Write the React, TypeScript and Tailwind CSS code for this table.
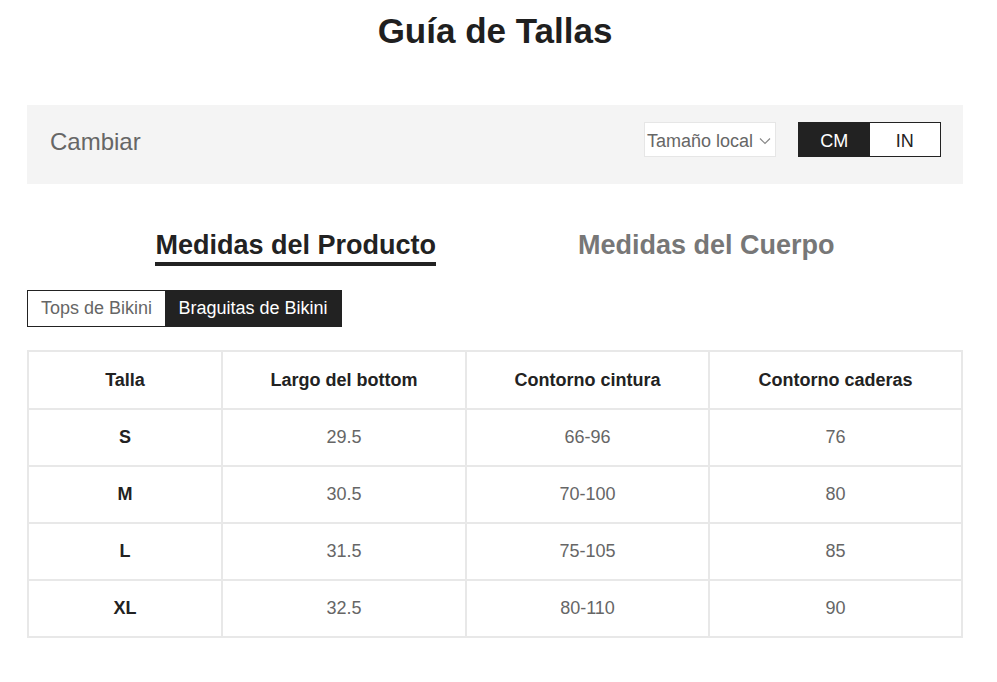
export default function App() {
  const rows = [
    { size: 'S', largo: '29.5', cintura: '66-96', caderas: '76' },
    { size: 'M', largo: '30.5', cintura: '70-100', caderas: '80' },
    { size: 'L', largo: '31.5', cintura: '75-105', caderas: '85' },
    { size: 'XL', largo: '32.5', cintura: '80-110', caderas: '90' },
  ];

  return (
    <div className="min-h-screen bg-white pl-[27px] pr-[34px] text-[#222]" style={{ fontFamily: '"Liberation Sans", Arial, sans-serif' }}>
      {/* Title */}
      <h1 className="pt-[11px] text-center text-[35px] font-bold leading-[40px] text-[#1f1f1f]">Guía de Tallas</h1>

      {/* Unit bar */}
      <div className="mt-[54px] flex h-[79px] items-start justify-between bg-[#f4f4f4] pl-[23px] pr-[22px] pt-[17px]">
        <span className="pt-[2px] text-[24px] leading-[35px] text-[#666]">Cambiar</span>
        <div className="flex items-center gap-[22px]">
          <div className="flex h-[35px] w-[132px] items-center justify-between border border-[#e6e6e6] bg-white pl-[2px] pr-[4px] pt-[3px] text-[18px] text-[#666]">
            <span>Tamaño local</span>
            <svg width="12" height="8" viewBox="0 0 12 8" fill="none" stroke="#888" strokeWidth="1.2">
              <path d="M1 1.5l5 5 5-5" />
            </svg>
          </div>
          <div className="flex h-[35px] w-[143px] border border-[#222] text-[18px]">
            <div className="flex flex-1 items-center justify-center bg-[#222] pt-[3px] text-white">CM</div>
            <div className="flex flex-1 items-center justify-center bg-white pt-[3px] text-[#222]">IN</div>
          </div>
        </div>
      </div>

      {/* Tabs */}
      <div className="mt-[45px] flex justify-center gap-[142px]">
        <div className="border-b-4 border-[#222] pb-[1px] text-[27px] font-bold leading-[32px] text-[#222]">Medidas del Producto</div>
        <div className="text-[27px] font-bold leading-[32px] text-[#777]">Medidas del Cuerpo</div>
      </div>

      {/* Sub tabs */}
      <div className="mt-[24px] flex h-[37px] w-fit border border-[#222] text-[18px]">
        <div className="flex w-[137px] items-center justify-center bg-white text-[#666]">Tops de Bikini</div>
        <div className="flex w-[176px] items-center justify-center bg-[#222] text-white">Braguitas de Bikini</div>
      </div>

      {/* Table */}
      <table className="mt-[23px] w-full border-collapse border-2 border-[#e8e8e8] text-center text-[18px]">
        <thead>
          <tr className="h-[58px]">
            <th className="w-[194px] border-2 border-[#e8e8e8] font-bold text-[#222]">Talla</th>
            <th className="w-[244px] border-2 border-[#e8e8e8] font-bold text-[#222]">Largo del bottom</th>
            <th className="w-[243px] border-2 border-[#e8e8e8] font-bold text-[#222]">Contorno cintura</th>
            <th className="border-2 border-[#e8e8e8] font-bold text-[#222]">Contorno caderas</th>
          </tr>
        </thead>
        <tbody>
          {rows.map((r) => (
            <tr key={r.size} className="h-[57px]">
              <td className="border-2 border-[#e8e8e8] font-bold text-[#222]">{r.size}</td>
              <td className="border-2 border-[#e8e8e8] text-[#666]">{r.largo}</td>
              <td className="border-2 border-[#e8e8e8] text-[#666]">{r.cintura}</td>
              <td className="border-2 border-[#e8e8e8] text-[#666]">{r.caderas}</td>
            </tr>
          ))}
        </tbody>
      </table>
    </div>
  );
}
